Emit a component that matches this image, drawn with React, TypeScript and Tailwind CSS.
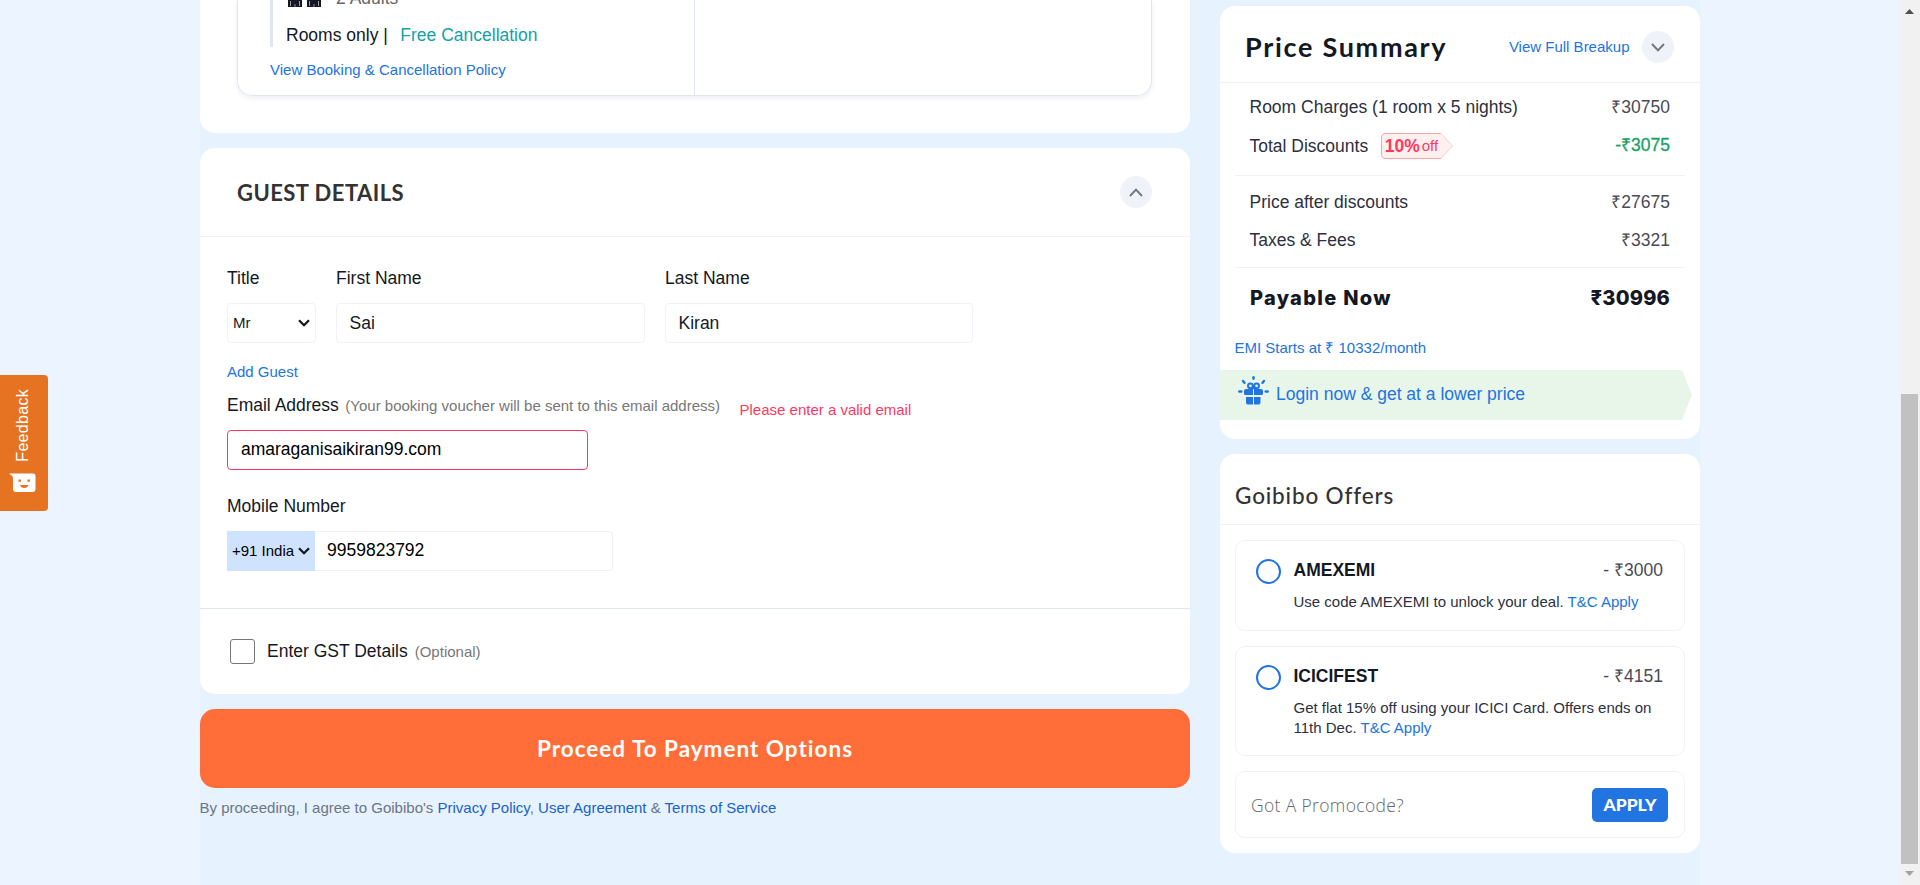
import type { ReactNode } from "react";

const heading = "font-['Lato',sans-serif]";

function Chevron({ up = false }: { up?: boolean }) {
  return (
    <span className="flex size-8 items-center justify-center rounded-full bg-[#eff2f8]">
      <svg width="14" height="9" viewBox="0 0 14 9" fill="none" stroke="#77777a" strokeWidth="2">
        <path d={up ? "M1 8 L7 1.6 L13 8" : "M1 1 L7 7.4 L13 1"} />
      </svg>
    </span>
  );
}

function SelectArrow() {
  return (
    <svg width="12" height="8" viewBox="0 0 12 8" fill="none" stroke="#141823" strokeWidth="2.3">
      <path d="M1 1.2 L6 6.2 L11 1.2" />
    </svg>
  );
}

function Field({ label, value, className }: { label: string; value: string; className: string }) {
  return (
    <div className={className}>
      <div className="h-12 leading-[46px]">{label}</div>
      <div className="flex h-10 items-center rounded-[4px] border border-[#eff2f8] px-[12.5px]">{value}</div>
    </div>
  );
}

function PriceRow({ label, amount, className = "", extra }: { label: string; amount: string; className?: string; extra?: ReactNode }) {
  return (
    <div className="flex h-[38px] items-center justify-between pr-[15px] pl-[14.5px]">
      <span className={`flex items-center text-[#2d3040] ${extra ? "pt-[2px]" : ""}`}>
        {label}
        {extra}
      </span>
      <span className={className || "text-[#4a4a55]"}>{amount}</span>
    </div>
  );
}

function DiscountTag() {
  return (
    <span className="relative ml-[12.5px] flex h-[26px] w-[72px] items-center pl-1 text-[#ff3860]">
      <svg className="absolute inset-0" width="72" height="26" viewBox="0 0 72 26">
        <path d="M60 .5 H5 Q.5 .5 .5 5 V21 Q.5 25.5 5 25.5 H60" fill="#fff0f0" stroke="#f5a3a8" />
        <path d="M60 .5 L71.500 13 L60 25.500" fill="#fff0f0" stroke="#fad0d2" />
      </svg>
      <b className="relative">10%</b>
      <span className="relative ml-[2px] text-[15px]">off</span>
    </span>
  );
}

function GiftIcon() {
  return (
    <svg width="31" height="29" viewBox="0 0 31 29" fill="none" stroke="#2274e0" strokeLinecap="round">
      <g strokeWidth="2.400">
        <path d="M15.500 1.200 V2.800" />
        <path d="M5 5 L6.500 6.800" />
        <path d="M26 5 L24.500 6.800" />
        <path d="M1.300 15.500 H3.300" />
        <path d="M27.700 15.500 H29.700" />
      </g>
      <circle cx="12.400" cy="9.800" r="2.400" strokeWidth="2" />
      <circle cx="18.600" cy="9.800" r="2.400" strokeWidth="2" />
      <path d="M8 13 H15 V19 H7.500 Q6 19 6 17.500 V15 Q6 13 8 13Z M16 13 H23 Q25 13 25 15 V17.500 Q25 19 23.500 19 H16Z M8 21 H15 V28.600 H10.500 Q8 28.600 8 26Z M16 21 H22.500 V26 Q22.500 28.600 20 28.600 H16Z" fill="#2274e0" stroke="none" />
      <path d="M12.500 14 L15.500 11.500 L18.500 14" strokeWidth="2" />
    </svg>
  );
}

function Offer({ code, amount, text, className }: { code: string; amount: string; text: string; className: string }) {
  return (
    <div className={`flex rounded-[10px] border border-[#eff2f8] pt-[18px] pl-5 pr-[21px] ${className}`}>
      <span className="size-[25px] shrink-0 rounded-full border-2 border-[#2274e0]" />
      <div className="-mt-px ml-[12.5px] flex-1">
        <div className="flex justify-between leading-6">
          <b className="text-[#141823]">{code}</b>
          <span className="text-[#4a4a55]">- {amount}</span>
        </div>
        <div className="mt-[10px] text-[15px] leading-5 text-[#2d3040]">
          {text} <span className="text-[#2274e0]">T&amp;C Apply</span>
        </div>
      </div>
    </div>
  );
}

function Adult() {
  return (
    <svg width="14" height="7" viewBox="0 0 14 7">
      <path d="M0 0 H14 V7 H0Z" fill="#141823" />
      <path d="M2.500 1 V6 M11.500 1 V6" stroke="#9a9ca5" strokeWidth="1" />
      <path d="M7 4 V7" stroke="#8a8c95" strokeWidth="1" />
    </svg>
  );
}

export default function App() {
  return (
    <div className="relative flex h-[885px] w-[1920px] overflow-hidden bg-[#ecf4ff] font-['Liberation_Sans',Arial,sans-serif] text-[17.5px] text-[#141823]">
      <main className="ml-[200px] flex w-[1500px] gap-[30px] bg-[#e7f2ff]">
        <div className="w-[990px]">
          <section className="h-[133px] rounded-b-[15px] bg-white px-[37px] pr-[38px]">
            <div className="flex h-24 rounded-b-[15px] border border-t-0 border-[#dfe5f2] shadow-[0_2px_5px_rgba(30,40,90,0.08)]">
              <div className="w-[457px] border-r border-[#dfe5f2] pl-8">
                <div className="h-[47px] border-l-[3px] border-[#dfe6f1] pl-[13px]">
                  <div className="flex h-[23px] items-start">
                    <span className="flex gap-[5px] pl-[2px]">
                      <Adult />
                      <Adult />
                    </span>
                    <span className="-mt-[15px] ml-[15px] leading-[26px] text-[#666666]">2 Adults</span>
                  </div>
                  <div className="leading-6">
                    Rooms only |<span className="ml-[12.5px] text-[#159fa8]">Free Cancellation</span>
                  </div>
                </div>
                <div className="mt-[11px] text-[15px] leading-6 text-[#2274e0]">View Booking &amp; Cancellation Policy</div>
              </div>
            </div>
          </section>

          <section className="mt-[15px] h-[546px] rounded-[15px] bg-white">
            <div className="flex h-[89px] items-center justify-between border-b border-[#eff2f8] pr-[38px] pl-[37px]">
              <h2 className={`${heading} pt-px text-[22px] font-bold tracking-[0.450px] text-[#333333]`}>GUEST DETAILS</h2>
              <Chevron up />
            </div>
            <div className="h-[372px] border-b border-[#dfe6ef] pt-[18px] pl-[27px]">
              <div className="flex gap-5">
                <div className="w-[89px]">
                  <div className="h-12 leading-[46px]">Title</div>
                  <div className="flex h-10 items-center justify-between rounded-[4px] border border-[#eff2f8] pr-[5px] pl-[5px] text-[15px]">
                    Mr
                    <SelectArrow />
                  </div>
                </div>
                <Field label="First Name" value="Sai" className="w-[309px]" />
                <Field label="Last Name" value="Kiran" className="w-[308px]" />
              </div>
              <div className="mt-[17px] text-[15px] leading-6 text-[#2274e0]">Add Guest</div>
              <div className="mt-[9px] flex leading-6">
                Email Address
                <span className="ml-[6.5px] pt-[1px] text-[15px] text-[#777777]">(Your booking voucher will be sent to this email address)</span>
                <span className="ml-[19.5px] pt-[5px] text-[15px] text-[#ff3860]">Please enter a valid email</span>
              </div>
              <div className="mt-[8px] flex h-10 w-[361px] items-center rounded-[4px] border border-[#ff3860] px-[13px] pb-px text-black">amaraganisaikiran99.com</div>
              <div className="mt-[24px] leading-6">Mobile Number</div>
              <div className="mt-[13px] flex h-10 w-[386px]">
                <div className="flex w-[88px] items-center justify-between bg-[#cfe3ff] pr-[5px] pl-[5px] text-[15px] text-black">
                  +91 India
                  <SelectArrow />
                </div>
                <div className="flex flex-1 items-center rounded-r-[4px] border border-l-0 border-[#eff2f5] pb-px pl-3 text-black">9959823792</div>
              </div>
            </div>
            <div className="flex h-[85px] items-center pl-[30px]">
              <span className="size-[25px] rounded-[3px] border border-[#767676]" />
              <span className="ml-[12px] pb-px">Enter GST Details</span>
              <span className="ml-[7px] pt-px text-[15px] text-[#777777]">(Optional)</span>
            </div>
          </section>

          <button className={`${heading} mt-[15px] block h-[79px] w-full rounded-[15px] bg-[#ff6d38] pt-px text-[22.500px] font-bold tracking-[1px] text-white`}>
            Proceed To Payment Options
          </button>
          <p className="mt-[8px] -ml-[0.5px] text-[15px] leading-6 text-[#6b7685]">
            By proceeding, I agree to Goibibo's <span className="text-[#1a63c8]">Privacy Policy</span>, <span className="text-[#1a63c8]">User Agreement</span> &amp;{" "}
            <span className="text-[#1a63c8]">Terms of Service</span>
          </p>
        </div>

        <div className="w-[480px] pt-[6px]">
          <section className="h-[433px] rounded-[15px] bg-white">
            <div className="flex h-[77px] items-center border-b border-[#eff2f8] pt-[6px] pr-[26px] pl-[25px]">
              <h2 className={`${heading} flex-1 text-[27px] font-bold tracking-[1.700px] text-[#141823]`}>Price Summary</h2>
              <span className="mr-[12.5px] text-[15px] text-[#2274e0]">View Full Breakup</span>
              <Chevron />
            </div>
            <div className="mx-[15px] h-[93px] border-b border-[#eff2f5] pt-[5px]">
              <PriceRow label="Room Charges (1 room x 5 nights)" amount="₹30750" />
              <PriceRow label="Total Discounts" amount="-₹3075" className="text-[#18a160] [-webkit-text-stroke:0.3px_#18a160]" extra={<DiscountTag />} />
            </div>
            <div className="mx-[15px] h-[92px] border-b border-[#eff2f5] pt-[7px]">
              <PriceRow label="Price after discounts" amount="₹27675" />
              <PriceRow label="Taxes & Fees" amount="₹3321" />
            </div>
            <div className="flex h-[60px] items-center justify-between px-[30px] font-['Inter',sans-serif] text-[20px] font-extrabold">
              <span className="tracking-[1.300px]">Payable Now</span>
              <span className="tracking-[0.200px]">₹30996</span>
            </div>
            <div className="mt-[8px] px-[14.5px] text-[15px] leading-6 text-[#2274e0]">EMI Starts at ₹ 10332/month</div>
            <div className="mt-[10px] flex h-[50px] w-[472px] items-center bg-[#e8f6ea] pl-[18px] text-[#2274e0] [clip-path:polygon(0_0,462px_0,472px_50%,462px_100%,0_100%)]">
              <span className="-mt-[9px] h-[29px]">
                <GiftIcon />
              </span>
              <span className="-mt-[2px] ml-[7px]">Login now &amp; get at a lower price</span>
            </div>
          </section>

          <section className="mt-[15px] h-[399px] rounded-[15px] bg-white">
            <h2 className={`${heading} flex h-[71px] items-center border-b border-[#eff2f8] pt-[13px] pl-[15px] text-[22.500px] font-medium tracking-[0.850px] text-[#333333]`}>
              Goibibo Offers
            </h2>
            <div className="flex flex-col gap-[15px] p-[15px]">
              <Offer code="AMEXEMI" amount="₹3000" text="Use code AMEXEMI to unlock your deal." className="h-[91px]" />
              <Offer code="ICICIFEST" amount="₹4151" text="Get flat 15% off using your ICICI Card. Offers ends on 11th Dec." className="h-[110px]" />
              <div className="flex h-[67px] items-center justify-between rounded-[10px] border border-[#eff2f8] pr-4 pl-[15px]">
                <span className="pt-[2px] font-['Open_Sans',sans-serif] text-[17.500px] font-light tracking-[0.350px] text-[#666666]">Got A Promocode?</span>
                <button className={`${heading} h-[34px] w-[76px] rounded-[5px] bg-[#2274e0] pt-[2px] text-[17.500px] font-black text-white`}>APPLY</button>
              </div>
            </div>
          </section>
        </div>
      </main>

      <aside className="ml-auto flex w-[20px] flex-col items-center bg-[#f1f1f1] pr-[1px]">
        <svg className="mt-[9px]" width="9" height="5" viewBox="0 0 9 5">
          <path d="M0 5 L4.500 0 L9 5Z" fill="#505050" />
        </svg>
        <div className="mt-[380px] h-[470px] w-[17px] bg-[#c1c1c1]" />
        <svg className="mt-[7px]" width="9" height="5" viewBox="0 0 9 5">
          <path d="M0 0 L4.500 5 L9 0Z" fill="#a3a3a3" />
        </svg>
      </aside>

      <div className="absolute top-[375px] left-0 flex h-[136px] w-12 flex-col items-center rounded-r-[4px] bg-[#e57322] pt-[14px] text-white">
        <span className="mr-[2px] rotate-180 text-[16px] leading-5 tracking-[0.300px] [writing-mode:vertical-rl]">Feedback</span>
        <svg className="mt-[11px] -ml-[4px]" width="27" height="20" viewBox="0 0 27 20">
          <path d="M0 .500 H24 Q26.500 .500 26.500 3 V16 Q26.500 19 23.500 19 H7 Q4 19 4 16 V5 Q3.500 2.500 0 .500Z" fill="#ffffff" />
          <path d="M9.500 6.500 h2.500 v2.200 h-2.500Z M18.500 6.500 h2.500 v2.200 h-2.500Z M11 12 H19.500 Q18.500 15 15.200 15 Q12 15 11 12Z" fill="#e57322" />
        </svg>
      </div>
    </div>
  );
}
